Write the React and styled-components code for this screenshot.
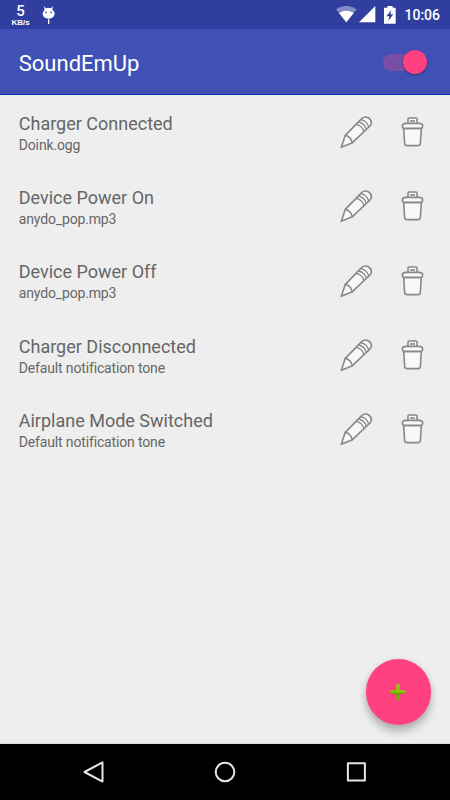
import React from 'react'
import styled, { createGlobalStyle } from 'styled-components'

const GlobalStyle = createGlobalStyle`
  body {
    margin: 0;
    font-family: Roboto, sans-serif;
  }

  svg {
    display: block;
  }
`

const Screen = styled.div`
  position: relative;
  display: flex;
  flex-direction: column;
  width: 450px;
  height: 800px;
  overflow: hidden;
  background: #eeeeee;
`

const StatusBar = styled.div`
  display: flex;
  justify-content: space-between;
  flex: none;
  height: 29px;
  box-sizing: border-box;
  padding: 0 10px 0 10.5px;
  color: #fff;
  background: #303f9f;
`

const StatusGroup = styled.div`
  display: flex;
`

const Speed = styled.div`
  display: flex;
  flex-direction: column;
  align-items: center;
  width: 20px;
  padding-top: 4px;
  margin-right: 11.5px;
`

const SpeedValue = styled.div`
  font-size: 15px;
  font-weight: 500;
  line-height: 14px;
`

const SpeedUnit = styled.div`
  font-family: 'Liberation Sans', sans-serif;
  font-weight: bold;
  font-size: 8px;
  line-height: 10px;
`

const Clock = styled.span`
  margin-left: 8.5px;
  font-size: 14px;
  font-weight: 500;
  line-height: 30px;
`

const AppBar = styled.header`
  display: flex;
  align-items: center;
  justify-content: space-between;
  flex: none;
  height: 66px;
  box-sizing: border-box;
  padding: 0 23px 0 18.75px;
  border-bottom: 1px solid #0433b0;
  background: #3f51b5;
`

const AppTitle = styled.h1`
  margin: 4px 0 0;
  color: #fff;
  font-size: 22px;
  font-weight: 400;
  line-height: 28px;
`

const Switch = styled.button`
  display: flex;
  align-items: center;
  justify-content: flex-end;
  width: 44px;
  height: 17px;
  margin-top: 1px;
  padding: 0;
  border: 0;
  border-radius: 9px;
  background: linear-gradient(#784ea6, #784ea6) no-repeat 0 0 / 30px 17px;
`

const Thumb = styled.span`
  flex: none;
  width: 24px;
  height: 24px;
  border-radius: 50%;
  background: #ff4081;
  box-shadow: 0 1px 2px rgba(0, 0, 0, 0.4);
`

const List = styled.ul`
  flex: 1;
  margin: 0;
  padding: 0;
  list-style: none;
  border-bottom: 1px solid #dcdcdc;
`

const Row = styled.li`
  display: flex;
  align-items: center;
  height: 74.4px;
  box-sizing: border-box;
  padding: 0 24px 0.7px 18.75px;
`

const RowText = styled.div`
  flex: 1;
  padding-top: 4px;
  color: #666;
`

const RowTitle = styled.div`
  font-size: 18px;
  line-height: 22px;
`

const RowSound = styled.div`
  font-size: 14px;
  line-height: 20.4px;
  letter-spacing: -0.15px;
`

const Actions = styled.div`
  display: flex;
  gap: 26px;
`

const Fab = styled.button`
  position: absolute;
  right: 18.75px;
  bottom: 75px;
  display: flex;
  align-items: center;
  justify-content: center;
  width: 65.6px;
  height: 65.6px;
  padding: 0;
  border: 0;
  border-radius: 50%;
  background: #ff4081;
  box-shadow: 0 7px 9px rgba(0, 0, 0, 0.22), 0 1px 7px rgba(0, 0, 0, 0.1);
`

const NavBar = styled.nav`
  display: flex;
  align-items: center;
  justify-content: center;
  gap: 107px;
  flex: none;
  height: 56px;
  background: #000;
`

const Mascot = () => (
  <svg width="14" height="20" viewBox="0 0 42 60">
    <path d="M5 0 L11 7 Q19 3 27 7 L33 0 L31 11 Q39 17 38 24 Q35 38 20 38 Q3 37 2 24 Q2 17 8 11 Z" fill="#fff" />
    <circle cx="12" cy="19" r="2.6" fill="#303f9f" />
    <circle cx="27" cy="19" r="2.6" fill="#303f9f" />
    <path d="M20 40 V54" stroke="#fff" strokeWidth="4" />
  </svg>
)

const Wifi = () => (
  <svg width="21" height="17" viewBox="0 0 63 51">
    <path d="M0 10 Q31 -11 62 10 L31 49 Z" fill="#fff" opacity="0.4" />
    <path d="M9 21 Q31 7 53 21 L31 49 Z" fill="#fff" />
  </svg>
)

const Signal = () => (
  <svg width="17" height="17" viewBox="0 0 51 51">
    <path d="M49 0 V49 H0 Z" fill="#fff" />
  </svg>
)

const Battery = () => (
  <svg width="12" height="18" viewBox="0 0 36 54">
    <path d="M10 0 H26 V5 H35 V53 H0 V5 H10 Z" fill="#fff" />
    <path d="M22 12 L7 31 H16 L13 45 L28 25 H19 Z" fill="#303f9f" />
  </svg>
)

const Pencil = () => (
  <svg width="34" height="34" viewBox="30 30 102 102" fill="none" stroke="#888" strokeWidth="4.8" strokeLinejoin="round" strokeLinecap="round">
    <path d="M34 127 L46 91 L95 41 Q105 32 116 39 Q127 47 123 58 L120 63 L67 113 Z" fill="#f8f8f8" />
    <path d="M46 91 Q62 95 67 113" />
    <path d="M79 58 Q97 62 102 80 M86 51 Q104 55 109 73 M93 44 Q111 48 116 66" strokeWidth="4" />
  </svg>
)

const Trash = () => (
  <svg width="26" height="34" viewBox="210 30 78 102" fill="none" stroke="#888" strokeWidth="4.8" strokeLinejoin="round">
    <path d="M221 70 L224 117 Q225 122 232 122 H263 Q270 122 271 117 L274 70 Z" fill="#f8f8f8" />
    <path d="M234 55 V42 Q234 39 237 39 H258 Q261 39 261 42 V55" fill="#f8f8f8" />
    <path d="M228 55 H267 Q278 56 278 63 Q278 70 272 70 H223 Q217 70 217 63 Q217 56 228 55 Z" fill="#f8f8f8" />
    <path d="M240 48 H255" />
  </svg>
)

const Plus = () => (
  <svg width="16" height="16" viewBox="0 0 48 48">
    <defs>
      <linearGradient id="plus" x1="0" y1="0" x2="0" y2="1">
        <stop offset="0" stopColor="#8fd600" />
        <stop offset="0.48" stopColor="#86c800" />
        <stop offset="0.62" stopColor="#659d00" />
        <stop offset="1" stopColor="#78b500" />
      </linearGradient>
    </defs>
    <path d="M19 1 H29 V19 H47 V29 H29 V47 H19 V29 H1 V19 H19 Z" fill="url(#plus)" />
  </svg>
)

const NavIcon = ({ children }) => (
  <svg width="24" height="24" viewBox="0 0 24 24" fill="none" stroke="#e6e6e6" strokeWidth="2" strokeLinejoin="round">
    {children}
  </svg>
)

const sounds = [
  { event: 'Charger Connected', sound: 'Doink.ogg' },
  { event: 'Device Power On', sound: 'anydo_pop.mp3' },
  { event: 'Device Power Off', sound: 'anydo_pop.mp3' },
  { event: 'Charger Disconnected', sound: 'Default notification tone' },
  { event: 'Airplane Mode Switched', sound: 'Default notification tone' },
]

const StatusIcons = styled(StatusGroup)`
  padding-top: 6px;
  gap: 2px;

  svg:last-child {
    margin: 0 0 0 6px;
  }
`

const MascotSlot = styled.div`
  padding-top: 6px;
`

const App = () => (
  <Screen>
    <GlobalStyle />
    <StatusBar>
      <StatusGroup>
        <Speed>
          <SpeedValue>5</SpeedValue>
          <SpeedUnit>KB/s</SpeedUnit>
        </Speed>
        <MascotSlot><Mascot /></MascotSlot>
      </StatusGroup>
      <StatusGroup>
        <StatusIcons>
          <Wifi />
          <Signal />
          <Battery />
        </StatusIcons>
        <Clock>10:06</Clock>
      </StatusGroup>
    </StatusBar>

    <AppBar>
      <AppTitle>SoundEmUp</AppTitle>
      <Switch aria-label="Sounds enabled"><Thumb /></Switch>
    </AppBar>

    <List>
      {sounds.map(({ event, sound }) => (
        <Row key={event}>
          <RowText>
            <RowTitle>{event}</RowTitle>
            <RowSound>{sound}</RowSound>
          </RowText>
          <Actions>
            <Pencil />
            <Trash />
          </Actions>
        </Row>
      ))}
    </List>

    <Fab aria-label="Add"><Plus /></Fab>

    <NavBar>
      <NavIcon><path d="M2.5 12 L20.5 2.4 V21.6 Z" /></NavIcon>
      <NavIcon><circle cx="12" cy="12" r="9.3" /></NavIcon>
      <NavIcon><rect x="3.9" y="3.2" width="17" height="17.4" /></NavIcon>
    </NavBar>
  </Screen>
)

export default App
